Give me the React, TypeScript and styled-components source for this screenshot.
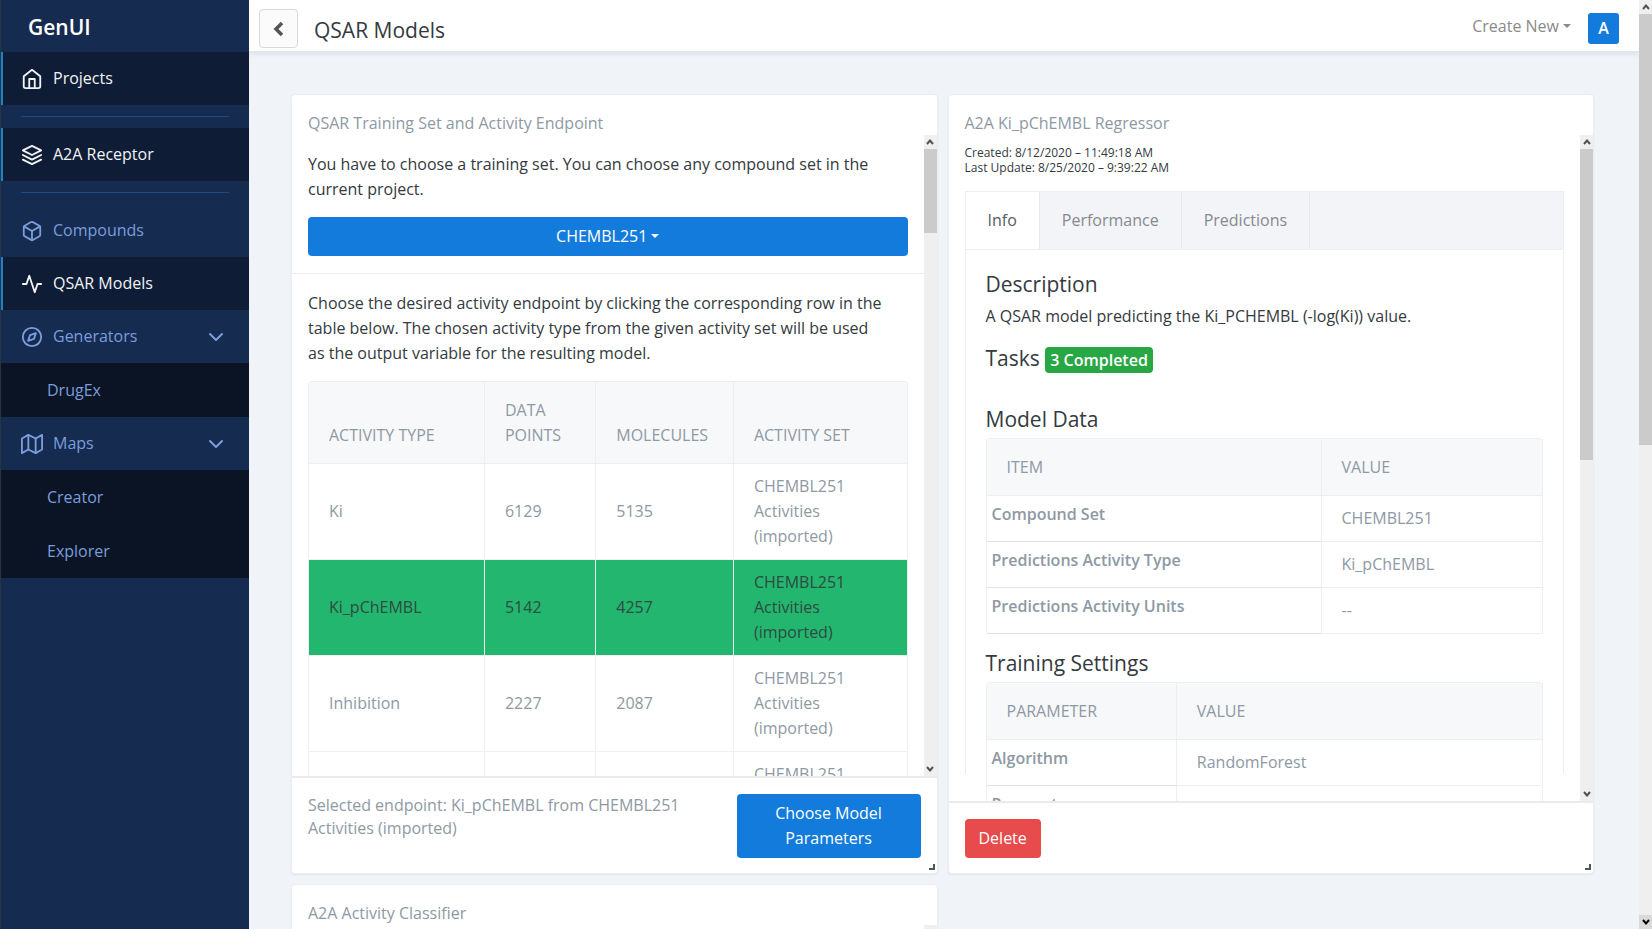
import React from "react";
import styled, { createGlobalStyle, css } from "styled-components";
import { FiActivity, FiBox, FiChevronDown, FiCompass, FiHome, FiLayers, FiMap } from "react-icons/fi";

const color = {
  navy: "#162b50",
  navyDark: "#0e1d35",
  navyDeep: "#0a1425",
  link: "#7a9ddb",
  accent: "#1c82cc",
  primary: "#127bdb",
  danger: "#e84b4b",
  success: "#28a745",
  selected: "#23b66f",
  page: "#f0f4f9",
  text: "#343a40",
  muted: "#8e99a4",
  line: "#eceef2",
  head: "#f7f8fa",
};

const GlobalStyle = createGlobalStyle`
  *, *::before, *::after { box-sizing: border-box; }
  body {
    margin: 0;
    background: ${color.page};
    color: ${color.text};
    font-family: "Open Sans", "Noto Sans", sans-serif;
    font-size: 16px;
    line-height: 25px;
  }
  button { font: inherit; cursor: pointer; }
  a { color: inherit; text-decoration: none; }
  h1, h2, h3, p, ul { margin: 0; padding: 0; font-weight: 400; }
`;

const Shell = styled.div`
  display: grid;
  grid-template-columns: 249px minmax(0, 1fr) 13px;
  height: 100vh;
  overflow: hidden;
`;

/* ---------- Sidebar ---------- */

const Sidebar = styled.nav`
  background: ${color.navy};
  border-left: 1px solid #2a3340;
`;

const Brand = styled.a`
  display: flex;
  align-items: center;
  height: 52px;
  padding: 3px 0 0 27px;
  color: #fff;
  font-size: 21px;
  font-weight: 600;
`;

const NavLink = styled.a<{ $active?: boolean }>`
  display: flex;
  align-items: center;
  gap: 10px;
  height: 53px;
  padding: 0 21px 0 18px;
  border-left: 2px solid ${(p) => (p.$active ? color.accent : "transparent")};
  background: ${(p) => (p.$active ? color.navyDark : "transparent")};
  color: ${(p) => (p.$active ? "#f1f3f6" : color.link)};

  span { flex: 1; }
`;

const SubLink = styled.a`
  display: flex;
  align-items: center;
  height: 54px;
  padding-left: 46px;
  background: ${color.navyDeep};
  color: ${color.link};
`;

const NavRule = styled.hr`
  height: 1px;
  margin: 11px 20px;
  border: 0;
  background: #1f4a83;
`;

/* ---------- Top bar ---------- */

const Main = styled.main`
  display: flex;
  flex-direction: column;
  min-width: 0;
  overflow: hidden;
`;

const TopBar = styled.header`
  display: flex;
  align-items: center;
  flex: none;
  height: 52px;
  padding: 6px 20px 0 10px;
  background: #fff;
  border-bottom: 1px solid #e3e6ec;
  box-shadow: 0 2px 5px rgba(40, 60, 90, 0.1);
`;

const BackButton = styled.button`
  display: grid;
  place-items: center;
  width: 39px;
  height: 39px;
  padding: 0 2px 0 0;
  border: 1px solid #d9d9d9;
  border-radius: 4px;
  background: #fbfbfb;
  color: #555;
`;

const PageTitle = styled.h1`
  flex: 1;
  margin-left: 16px;
  padding-top: 3px;
  font-size: 21px;
`;

const Caret = styled.i`
  display: inline-block;
  margin-left: 4px;
  vertical-align: 4px;
  border: 4px solid transparent;
  border-top-color: currentColor;
  border-bottom: 0;
`;

const CreateButton = styled.button`
  margin-right: 17px;
  padding: 0 0 4px;
  border: 0;
  background: none;
  color: #8a8a8a;
`;

const Avatar = styled.button`
  width: 31px;
  height: 31px;
  padding: 0;
  border: 0;
  border-radius: 3px;
  background: ${color.primary};
  color: #fff;
  font-weight: 600;
`;

/* ---------- Cards ---------- */

const Board = styled.div`
  display: grid;
  grid-template-columns: repeat(2, minmax(0, 1fr));
  gap: 10px;
  padding: 42px 45px 0 42px;
`;

const Card = styled.section`
  position: relative;
  display: flex;
  flex-direction: column;
  height: 780px;
  background: #fff;
  border: 1px solid #eaedf2;
  border-radius: 4px;
  box-shadow: 0 1px 2px rgba(40, 60, 90, 0.08);
  overflow: hidden;
`;

const CardTitle = styled.h2`
  flex: none;
  height: 40px;
  padding: 16px 16px 0;
  font-size: 16px;
  color: ${color.muted};
`;

const CardBody = styled.div`
  display: flex;
  flex: 1;
  min-height: 0;
`;

const Pane = styled.div`
  flex: 1;
  min-width: 0;
  overflow: hidden;
`;

const Section = styled.div`
  display: grid;
  gap: 15px;
  padding: 17px 16px;

  & + & { border-top: 1px solid ${color.line}; }
`;

const Lead = styled.p`
  max-width: 578px;
`;

const CardFooter = styled.footer`
  display: flex;
  flex: none;
  justify-content: space-between;
  align-items: flex-start;
  padding: 16px 16px 15px;
  border-top: 2px solid #e9eaec;
`;

const FooterNote = styled.p`
  max-width: 400px;
  line-height: 23px;
  color: ${color.muted};
`;

const Button = styled.button<{ $tone?: "primary" | "danger" }>`
  padding: 7px 14px;
  border: 0;
  border-radius: 4px;
  background: ${(p) => (p.$tone === "danger" ? color.danger : color.primary)};
  color: #fff;
`;

const FooterButton = styled(Button)`
  width: 184px;
`;

const Grip = styled.span`
  position: absolute;
  right: 2px;
  bottom: 3px;
  width: 6px;
  height: 6px;
  border-right: 2px solid #555;
  border-bottom: 2px solid #555;
`;

/* ---------- Scrollbars ---------- */

const Track = styled.div`
  display: flex;
  flex-direction: column;
  flex: none;
  width: 13px;
  background: #efefef;
`;

const Arrow = styled.span<{ $pressed?: boolean }>`
  display: grid;
  place-items: center;
  flex: none;
  height: 14px;
  background: ${(p) => (p.$pressed ? "#dadada" : "transparent")};
  color: ${(p) => (p.$pressed ? "#000" : "#505050")};
`;

const Stretch = styled.div<{ $share: number; $thumb?: boolean }>`
  flex: ${(p) => p.$share} 0 0;
  background: ${(p) => (p.$thumb ? "#cbcbcb" : "transparent")};
`;

/* share: the thumb's part of the track, in thousandths */
function ScrollBar({ share, pressed }: { share: number; pressed?: boolean }) {
  return (
    <Track aria-hidden="true">
      <Arrow>
        <svg width="8" height="8" viewBox="0 0 8 8" fill="none" stroke="currentColor" strokeWidth="2">
          <path d="M1 6l3-3.4L7 6" />
        </svg>
      </Arrow>
      <Stretch $share={share} $thumb />
      <Stretch $share={1000 - share} />
      <Arrow $pressed={pressed}>
        <svg width="8" height="8" viewBox="0 0 8 8" fill="none" stroke="currentColor" strokeWidth="2">
          <path d="M1 2l3 3.4L7 2" />
        </svg>
      </Arrow>
    </Track>
  );
}

/* ---------- Tables ---------- */

const cellLine = css`
  border-right: 1px solid ${color.line};
  border-bottom: 1px solid ${color.line};
`;

const Table = styled.table`
  width: 100%;
  table-layout: fixed;
  border-collapse: separate;
  border-spacing: 0;
  border: 1px solid ${color.line};
  border-width: 1px 0 0 1px;
  border-radius: 4px;
  color: ${color.muted};
  text-align: left;

  thead th {
    ${cellLine}
    padding: 16px 20px 15px;
    background: ${color.head};
    font-weight: 400;
    text-transform: uppercase;
    vertical-align: bottom;
  }

  tbody td {
    ${cellLine}
    padding: 10px 20px;
  }

  tbody th {
    ${cellLine}
    padding: 6px 5px 14px;
    border-bottom-color: #dfe2e7;
    font-weight: 600;
    vertical-align: top;
  }
`;

/* share: the column's part of the table, in thousandths */
const Col = styled.col<{ $share: number }>`
  width: ${(p) => p.$share / 10}%;
`;

const Row = styled.tr<{ $selected?: boolean }>`
  ${(p) =>
    p.$selected &&
    css`
      background: ${color.selected};
      color: #2f4a42;
      td { border-color: #a8dfc4; }
    `}
`;

/* ---------- Model details ---------- */

const Dates = styled.div`
  font-size: 12px;
  line-height: 15px;
`;

const ModelSection = styled.div`
  padding: 10px 16px 16px;
`;

const TabStrip = styled.div`
  display: flex;
  margin-top: 16px;
  background: #f3f4f7;
  border: 1px solid ${color.line};
`;

const Tab = styled.button<{ $active?: boolean }>`
  height: 57px;
  padding: 0 22px;
  border: 0;
  border-right: 1px solid #e7e9ed;
  background: ${(p) => (p.$active ? "#fff" : "transparent")};
  color: ${(p) => (p.$active ? "#555b61" : "#868a8e")};
`;

const TabPanel = styled.div`
  height: 524px;
  padding: 19px 20px 0;
  border: 1px solid ${color.line};
  border-width: 0 1px;
`;

const Heading = styled.h3`
  font-size: 21px;
  line-height: 30px;
`;

const Description = styled.p`
  margin: 5px 0 14px;
`;

const Badge = styled.span`
  display: inline-block;
  padding: 0 5px;
  border-radius: 4px;
  background: ${color.success};
  color: #fff;
  font-size: 16px;
  line-height: 26px;
  font-weight: 600;
`;

const TaskLine = styled(Heading)`
  margin-bottom: 31px;
`;

const DataBlock = styled.div`
  display: grid;
  gap: 4px;
  margin-bottom: 14px;
`;

const endpoints = [
  { type: "Ki", points: 6129, molecules: 5135 },
  { type: "Ki_pChEMBL", points: 5142, molecules: 4257, selected: true },
  { type: "Inhibition", points: 2227, molecules: 2087 },
  { type: "", points: "", molecules: "" },
];

const modelData = [
  ["Compound Set", "CHEMBL251"],
  ["Predictions Activity Type", "Ki_pChEMBL"],
  ["Predictions Activity Units", "--"],
];

const trainingSettings = [
  ["Algorithm", "RandomForest"],
  ["Parameters", ""],
];

function DetailTable({ title, label, rows, first }: { title: string; label: string; rows: string[][]; first: number }) {
  return (
    <DataBlock>
      <Heading>{title}</Heading>
      <Table aria-label={title}>
        <colgroup>
          <Col $share={first} />
          <Col $share={1000 - first} />
        </colgroup>
        <thead>
          <tr>
            <th scope="col">{label}</th>
            <th scope="col">Value</th>
          </tr>
        </thead>
        <tbody>
          {rows.map(([name, value]) => (
            <tr key={name}>
              <th scope="row">{name}</th>
              <td>{value}</td>
            </tr>
          ))}
        </tbody>
      </Table>
    </DataBlock>
  );
}

export default function App() {
  return (
    <>
      <GlobalStyle />
      <Shell>
        <Sidebar aria-label="Main">
          <Brand href="#">GenUI</Brand>
          <NavLink href="#projects" $active><FiHome size={22} /><span>Projects</span></NavLink>
          <NavRule />
          <NavLink href="#project" $active><FiLayers size={22} /><span>A2A Receptor</span></NavLink>
          <NavRule />
          <NavLink href="#compounds"><FiBox size={22} /><span>Compounds</span></NavLink>
          <NavLink href="#qsar" $active><FiActivity size={22} /><span>QSAR Models</span></NavLink>
          <NavLink href="#generators"><FiCompass size={22} /><span>Generators</span><FiChevronDown size={24} /></NavLink>
          <SubLink href="#drugex">DrugEx</SubLink>
          <NavLink href="#maps"><FiMap size={22} /><span>Maps</span><FiChevronDown size={24} /></NavLink>
          <SubLink href="#creator">Creator</SubLink>
          <SubLink href="#explorer">Explorer</SubLink>
        </Sidebar>

        <Main>
          <TopBar>
            <BackButton aria-label="Back">
              <svg width="12" height="16" viewBox="0 0 12 16" fill="none" stroke="currentColor" strokeWidth="3.5">
                <path d="M10 2L4 8l6 6" />
              </svg>
            </BackButton>
            <PageTitle>QSAR Models</PageTitle>
            <CreateButton>Create New<Caret /></CreateButton>
            <Avatar aria-label="Account">A</Avatar>
          </TopBar>

          <Board>
            <Card>
              <CardTitle>QSAR Training Set and Activity Endpoint</CardTitle>
              <CardBody>
                <Pane>
                  <Section>
                    <Lead>You have to choose a training set. You can choose any compound set in the current project.</Lead>
                    <Button>CHEMBL251<Caret /></Button>
                  </Section>
                  <Section>
                    <Lead>
                      Choose the desired activity endpoint by clicking the corresponding row in the table below. The
                      chosen activity type from the given activity set will be used as the output variable for the
                      resulting model.
                    </Lead>
                    <Table aria-label="Activity endpoints">
                      <colgroup>
                        <Col $share={294} />
                        <Col $share={186} />
                        <Col $share={230} />
                        <Col $share={290} />
                      </colgroup>
                      <thead>
                        <tr>
                          <th scope="col">Activity Type</th>
                          <th scope="col">Data Points</th>
                          <th scope="col">Molecules</th>
                          <th scope="col">Activity Set</th>
                        </tr>
                      </thead>
                      <tbody>
                        {endpoints.map((e) => (
                          <Row key={e.type} $selected={e.selected}>
                            <td>{e.type}</td>
                            <td>{e.points}</td>
                            <td>{e.molecules}</td>
                            <td>CHEMBL251 Activities (imported)</td>
                          </Row>
                        ))}
                      </tbody>
                    </Table>
                  </Section>
                </Pane>
                <ScrollBar share={137} />
              </CardBody>
              <CardFooter>
                <FooterNote>Selected endpoint: Ki_pChEMBL from CHEMBL251 Activities (imported)</FooterNote>
                <FooterButton>Choose Model Parameters</FooterButton>
              </CardFooter>
              <Grip />
            </Card>

            <Card>
              <CardTitle>A2A Ki_pChEMBL Regressor</CardTitle>
              <CardBody>
                <Pane>
                  <ModelSection>
                    <Dates>
                      <p>Created: 8/12/2020 – 11:49:18 AM</p>
                      <p>Last Update: 8/25/2020 – 9:39:22 AM</p>
                    </Dates>
                    <TabStrip role="tablist">
                      <Tab role="tab" aria-selected="true" $active>Info</Tab>
                      <Tab role="tab" aria-selected="false">Performance</Tab>
                      <Tab role="tab" aria-selected="false">Predictions</Tab>
                    </TabStrip>
                    <TabPanel role="tabpanel" aria-label="Info">
                      <Heading>Description</Heading>
                      <Description>A QSAR model predicting the Ki_PCHEMBL (-log(Ki)) value.</Description>
                      <TaskLine>Tasks <Badge>3 Completed</Badge></TaskLine>
                      <DetailTable title="Model Data" label="Item" rows={modelData} first={602} />
                      <DetailTable title="Training Settings" label="Parameter" rows={trainingSettings} first={342} />
                    </TabPanel>
                  </ModelSection>
                </Pane>
                <ScrollBar share={487} />
              </CardBody>
              <CardFooter>
                <Button $tone="danger">Delete</Button>
              </CardFooter>
              <Grip />
            </Card>

            <Card>
              <CardTitle>A2A Activity Classifier</CardTitle>
              <CardBody>
                <Pane />
                <ScrollBar share={500} />
              </CardBody>
            </Card>
          </Board>
        </Main>

        <ScrollBar share={478} pressed />
      </Shell>
    </>
  );
}
